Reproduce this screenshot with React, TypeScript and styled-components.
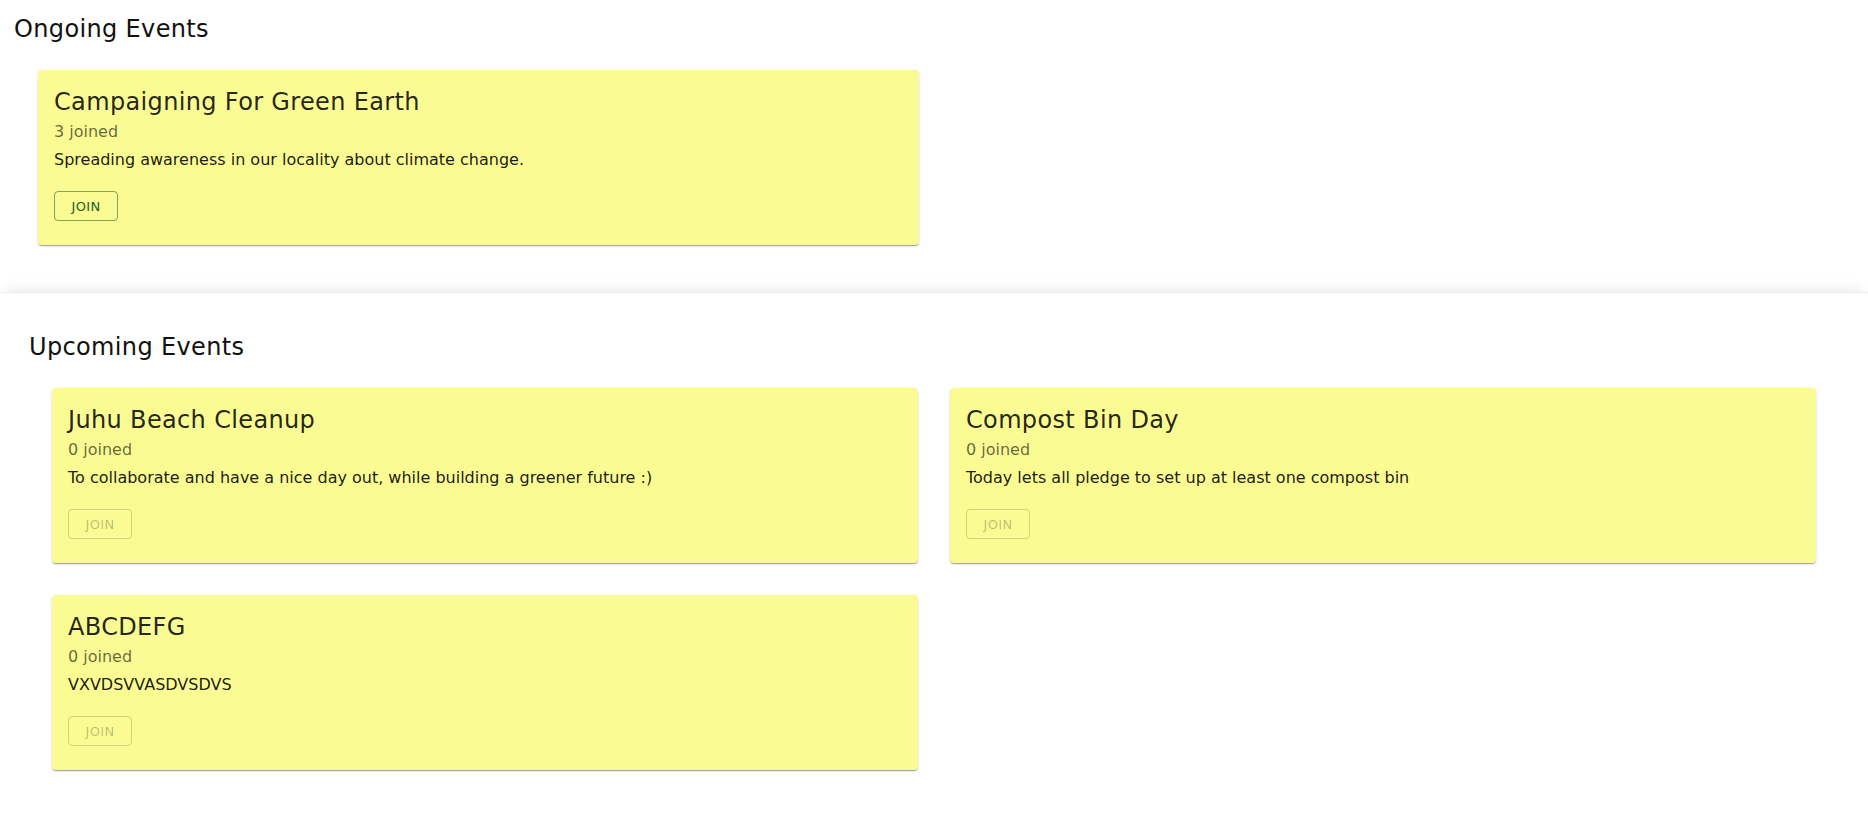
import React from "react";
import styled, { createGlobalStyle } from "styled-components";

const GlobalStyle = createGlobalStyle`
  html, body {
    margin: 0;
    padding: 0;
    background: #ffffff;
    font-family: "DejaVu Sans", "Liberation Sans", sans-serif;
  }
  * { box-sizing: border-box; }
`;

type EventItem = {
  title: string;
  joined: number;
  description: string;
  canJoin: boolean;
};

const ongoing: EventItem[] = [
  {
    title: "Campaigning For Green Earth",
    joined: 3,
    description: "Spreading awareness in our locality about climate change.",
    canJoin: true,
  },
];

const upcoming: EventItem[] = [
  {
    title: "Juhu Beach Cleanup",
    joined: 0,
    description:
      "To collaborate and have a nice day out, while building a greener future :)",
    canJoin: false,
  },
  {
    title: "Compost Bin Day",
    joined: 0,
    description: "Today lets all pledge to set up at least one compost bin",
    canJoin: false,
  },
  {
    title: "ABCDEFG",
    joined: 0,
    description: "VXVDSVVASDVSDVS",
    canJoin: false,
  },
];

const Page = styled.main`
  display: flex;
  flex-direction: column;
  width: 100%;
  min-height: 814px;
`;

const Section = styled.section<{ $raised?: boolean }>`
  position: relative;
  background: #ffffff;
  padding: ${(p) => (p.$raised ? "38px 52px 44px 29px" : "13px 36px 47px 14px")};
  ${(p) =>
    p.$raised
      ? `border-top: 1px solid #ececec;
         box-shadow: 0 -9px 14px -7px rgba(0, 0, 0, 0.09);`
      : ""}
`;

const SectionTitle = styled.h2`
  margin: 0 0 25px 0;
  font-size: 24px;
  line-height: 32px;
  font-weight: 400;
  color: #111111;
  letter-spacing: 0.35px;
`;

const CardGrid = styled.div<{ $indent: number }>`
  display: grid;
  grid-template-columns: 1fr 1fr;
  column-gap: 32px;
  row-gap: 32px;
  margin-left: ${(p) => p.$indent}px;
`;

const Card = styled.article`
  background: #fbfb94;
  border-radius: 4px;
  padding: 16px 16px 24px 16px;
  box-shadow: 0px 2px 1px -1px rgba(0, 0, 0, 0.2),
    0px 1px 1px 0px rgba(0, 0, 0, 0.14), 0px 1px 3px 0px rgba(0, 0, 0, 0.12);
  display: flex;
  flex-direction: column;
  align-items: flex-start;
`;

const CardTitle = styled.div`
  font-size: 24px;
  line-height: 33px;
  font-weight: 400;
  color: rgba(0, 0, 0, 0.87);
  letter-spacing: 0.35px;
`;

const Joined = styled.div`
  margin-top: 1px;
  font-size: 16px;
  line-height: 24px;
  color: rgba(0, 0, 0, 0.6);
`;

const Description = styled.p`
  margin: 4px 0 0 0;
  font-size: 16px;
  line-height: 24px;
  color: rgba(0, 0, 0, 0.9);
`;

const JoinButton = styled.button`
  margin-top: 19px;
  min-width: 64px;
  height: 30px;
  padding: 3px 9px;
  border-radius: 4px;
  background: transparent;
  font-family: "DejaVu Sans", "Liberation Sans", sans-serif;
  font-size: 13px;
  font-weight: 400;
  letter-spacing: 0.3px;
  text-transform: uppercase;
  border: 1px solid rgba(27, 94, 32, 0.55);
  color: #1b5e20;
  cursor: pointer;

  &:disabled {
    border-color: rgba(0, 0, 0, 0.16);
    color: rgba(0, 0, 0, 0.26);
    cursor: default;
  }
`;

function EventCard({ item }: { item: EventItem }) {
  return (
    <Card>
      <CardTitle>{item.title}</CardTitle>
      <Joined>{item.joined} joined</Joined>
      <Description>{item.description}</Description>
      <JoinButton disabled={!item.canJoin}>Join</JoinButton>
    </Card>
  );
}

export default function App() {
  return (
    <>
      <GlobalStyle />
      <Page>
        <Section>
          <SectionTitle>Ongoing Events</SectionTitle>
          <CardGrid $indent={24}>
            {ongoing.map((e) => (
              <EventCard key={e.title} item={e} />
            ))}
          </CardGrid>
        </Section>
        <Section $raised>
          <SectionTitle>Upcoming Events</SectionTitle>
          <CardGrid $indent={23}>
            {upcoming.map((e) => (
              <EventCard key={e.title} item={e} />
            ))}
          </CardGrid>
        </Section>
      </Page>
    </>
  );
}
